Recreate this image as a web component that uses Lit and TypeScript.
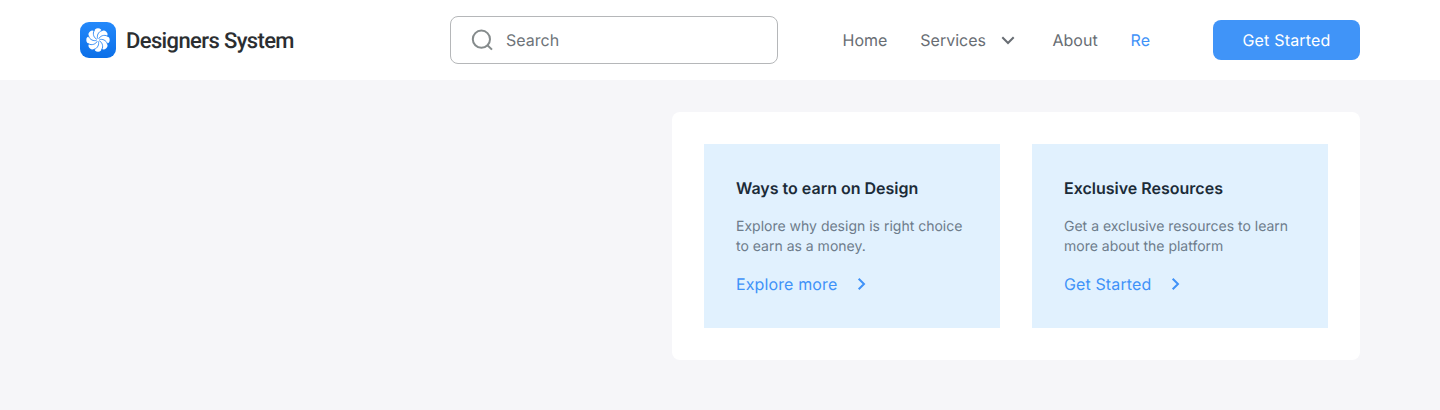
import { LitElement, html, css, svg } from "lit";
import { customElement, property } from "lit/decorators.js";

const petals = [0, 45, 90, 135, 180, 225, 270, 315];

@customElement("brand-logo")
class BrandLogo extends LitElement {
  static styles = css`
    :host { display: flex; align-items: center; gap: 10px; }
    .mark { display: block; flex: none; }
    .name {
      padding-top: 3px;
      font: 500 22px/27px Roboto, sans-serif;
      letter-spacing: -0.62px;
      color: #2b2e31;
      white-space: nowrap;
    }
  `;
  render() {
    return html`
      <svg class="mark" width="36" height="36" viewBox="0 0 36 36">
        <defs>
          <linearGradient id="g" x1="0" y1="0" x2="0" y2="1">
            <stop offset="0" stop-color="#2489fb" />
            <stop offset="1" stop-color="#0b6fe8" />
          </linearGradient>
        </defs>
        <rect width="36" height="36" rx="9" fill="url(#g)" />
        <circle cx="18" cy="18" r="8.6" fill="#fff" />
        ${petals.map((a) => svg`<circle transform="rotate(${a} 18 18)" cx="18" cy="10" r="3.7" fill="#fff" />`)}
        ${petals.map(
          (a) => svg`<path
            transform="rotate(${a + 22} 18 18)"
            d="M17.2 16.8C15.2 14.6 14.9 10.4 18.4 7.4"
            fill="none" stroke="#187df4" stroke-width="0.75" />`
        )}
      </svg>
      <span class="name">Designers System</span>
    `;
  }
}

@customElement("promo-card")
class PromoCard extends LitElement {
  @property() heading = "";
  @property() body = "";
  @property() action = "";
  static styles = css`
    :host {
      display: flex;
      flex-direction: column;
      box-sizing: border-box;
      padding: 32px;
      background: #e1f1fe;
      font-family: Inter, sans-serif;
    }
    .heading { margin: 0; font-size: 16px; line-height: 24px; font-weight: 600; color: #1b2b38; }
    .body {
      margin: 17px 0 15px;
      font-size: 14px;
      line-height: 20px;
      color: #6d7c8b;
      white-space: pre;
    }
    .action {
      display: flex;
      align-items: center;
      gap: 12px;
      font-size: 16px;
      line-height: 24px;
      letter-spacing: 0.12px;
      color: #3f92f8;
    }
  `;
  render() {
    return html`
      <h3 class="heading">${this.heading}</h3>
      <p class="body">${this.body}</p>
      <div class="action">
        <span>${this.action}</span>
        <svg width="24" height="24" viewBox="0 0 24 24" fill="none" stroke="currentColor" stroke-width="2">
          <path d="M9.7 6.7L15 12L9.7 17.3" />
        </svg>
      </div>
    `;
  }
}

@customElement("app-root")
class AppRoot extends LitElement {
  static styles = css`
    :host {
      display: block;
      height: 410px;
      background: #f6f6f9;
      font-family: Inter, sans-serif;
      font-size: 16px;
      line-height: 24px;
      text-rendering: geometricPrecision;
    }
    .bar {
      display: flex;
      align-items: center;
      box-sizing: border-box;
      height: 80px;
      padding: 0 80px;
      background: #fff;
    }
    .brand { width: 370px; flex: none; }
    .search {
      display: flex;
      align-items: center;
      gap: 12px;
      box-sizing: border-box;
      width: 328px;
      height: 48px;
      padding: 0 19px;
      border: 1px solid #b5b7b9;
      border-radius: 8px;
      color: #6e7479;
    }
    .search svg { color: #858b8c; }
    .nav {
      display: flex;
      align-items: center;
      margin-left: 64.5px;
      gap: 33px;
      color: #686d73;
    }
    .menu { display: flex; align-items: center; gap: 10px; }
    .menu svg { margin-right: -0.5px; }
    .current { color: #3f92f8; }
    .cta {
      margin-left: auto;
      width: 147px;
      height: 40px;
      padding: 0;
      border: 0;
      border-radius: 8px;
      background: #4094f8;
      color: #fff;
      font: 400 16px/24px Inter, sans-serif;
      letter-spacing: 0.2px;
      text-rendering: geometricPrecision;
    }
    .panel {
      display: grid;
      grid-template-columns: 1fr 1fr;
      gap: 32px;
      box-sizing: border-box;
      width: 688px;
      height: 248px;
      margin: 32px 80px 0 auto;
      padding: 32px;
      border-radius: 8px;
      background: #fff;
    }
  `;
  render() {
    return html`
      <header class="bar">
        <brand-logo class="brand"></brand-logo>
        <div class="search">
          <svg width="24" height="24" viewBox="0 0 24 24" fill="none" stroke="currentColor" stroke-width="2">
            <circle cx="11.4" cy="11.2" r="8.6" />
            <path d="M17.4 17.2L22 21.6" />
          </svg>
          <span>Search</span>
        </div>
        <nav class="nav">
          <span>Home</span>
          <span class="menu">Services
            <svg width="24" height="24" viewBox="0 0 24 24" fill="none" stroke="currentColor" stroke-width="2">
              <path d="M6.3 9.3L12 15L17.7 9.3" />
            </svg>
          </span>
          <span>About</span>
          <span class="current">Re</span>
        </nav>
        <button class="cta">Get Started</button>
      </header>
      <section class="panel">
        <promo-card
          heading="Ways to earn on Design"
          .body=${"Explore why design is right choice\nto earn as a money."}
          action="Explore more"></promo-card>
        <promo-card
          heading="Exclusive Resources"
          .body=${"Get a exclusive resources to learn\nmore about the platform"}
          action="Get Started"></promo-card>
      </section>
    `;
  }
}
